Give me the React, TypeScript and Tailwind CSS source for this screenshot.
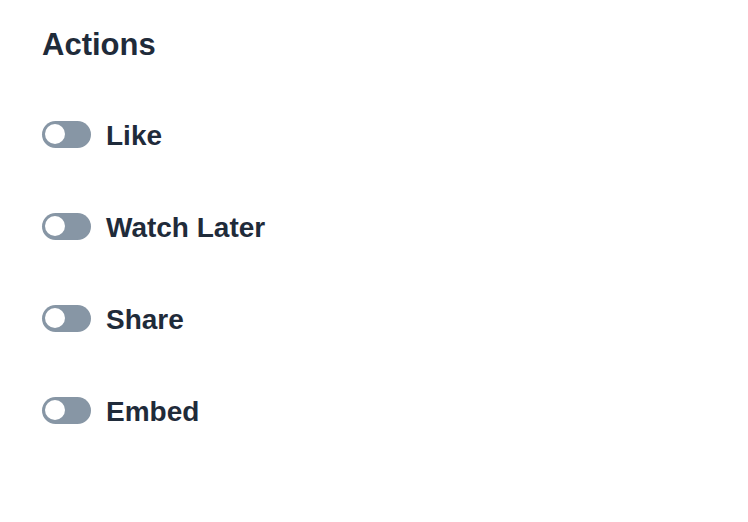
import { useState } from 'react'

const actions = ['Like', 'Watch Later', 'Share', 'Embed']

function Toggle({ on, onClick }: { on: boolean; onClick: () => void }) {
  return (
    <button
      type="button"
      onClick={onClick}
      className={`flex h-[27px] w-[49px] shrink-0 items-center rounded-full px-[3px] ${on ? 'justify-end bg-[#3b82f6]' : 'justify-start bg-[#8796a5]'}`}
    >
      <span className="block h-[20px] w-[20px] rounded-full bg-white" />
    </button>
  )
}

export default function App() {
  const [enabled, setEnabled] = useState<Record<string, boolean>>({})

  return (
    <div className="min-h-screen bg-white pl-[42px] pt-[27px] font-['Liberation_Sans',Arial,sans-serif] text-[#1f2b3a]">
      <h2 className="text-[31px] font-bold leading-[36px]">Actions</h2>

      <div className="mt-[53px] flex flex-col gap-[56px]">
        {actions.map((name) => (
          <label key={name} className="flex items-center gap-[15px]">
            <Toggle
              on={!!enabled[name]}
              onClick={() => setEnabled((s) => ({ ...s, [name]: !s[name] }))}
            />
            <span className="mt-[4px] text-[28px] font-bold leading-[32px]">{name}</span>
          </label>
        ))}
      </div>
    </div>
  )
}
